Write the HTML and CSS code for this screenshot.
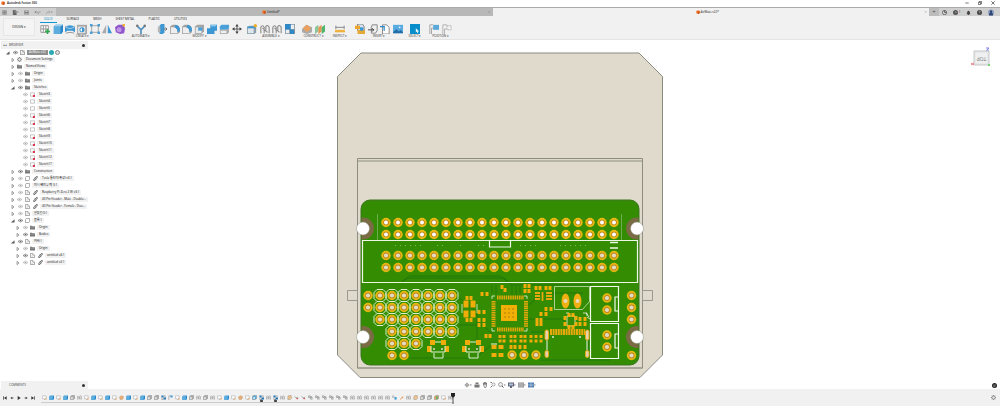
FILE: index.html
```html
<!DOCTYPE html>
<html lang="en">
<head>
    <meta charset="UTF-8">
    <meta name="viewport" content="width=device-width, initial-scale=1.0">
    <title>Autodesk Fusion 360</title>
    <link rel="stylesheet" href="styles.css">
</head>
<body>
    <!-- icon set, every symbol is drawn on a 12x12 grid -->
    <svg class="sprite" aria-hidden="true">
        <symbol id="logo" viewBox="0 0 12 12"><path d="M1 3l5-2 5 2v7l-5 2-5-2z" fill="#ee7023"/><path d="M6 5l5-2v7l-5 2z" fill="#c9501a"/></symbol>
        <symbol id="grid" viewBox="0 0 12 12"><path d="M1 1h10v10H1z" fill="#777"/><path d="M1 4h10M1 8h10M4 1v10M8 1v10" stroke="#bbb"/></symbol>
        <symbol id="file" viewBox="0 0 12 12"><path d="M2 0h6l3 3v9H2z" fill="#666"/><path d="M7 1v4h4" stroke="#ccc" fill="none"/></symbol>
        <symbol id="save" viewBox="0 0 12 12"><path d="M1 1h10v10H1z" fill="#777"/><path d="M3 1h6v4H3zM3 8h6v3H3z" fill="#c5c5c5"/></symbol>
        <symbol id="undo" viewBox="0 0 12 12"><path d="M5 2L2 5l3 3M2 5h6q3 0 3 5" fill="none" stroke="#777" stroke-width="1.5"/></symbol>
        <symbol id="redo" viewBox="0 0 12 12"><path d="M7 2l3 3-3 3M10 5H4q-3 0-3 5" fill="none" stroke="#999" stroke-width="1.5"/></symbol>
        <symbol id="sketch" viewBox="0 0 12 12"><path d="M1 2h9v8H1zM1 6h9M4 2v8M7 2v8" fill="#fff" stroke="#8a8a8a"/><path d="M9 6v6M6 9h6" stroke="#35a853" stroke-width="2"/></symbol>
        <symbol id="extrude" viewBox="0 0 12 12"><path d="M1 3l2-2h9v8l-2 3H1z" fill="#2b87c8"/><path d="M1 3h8v9H1z" fill="#5badde"/><path d="M1 3l2-2h9L9 3z" fill="#9dd0ef"/></symbol>
        <symbol id="revolve" viewBox="0 0 12 12"><path d="M0 4q6-5 12 0v6l-3-2H3l-3 2z" fill="#3c97d3"/><path d="M1 4q5 3 10 0" stroke="#b5daf1" fill="none"/><path d="M0 2v3M12 2v3M1 11q5-2 10 0" stroke="#888" fill="none"/></symbol>
        <symbol id="hole" viewBox="0 0 12 12"><path d="M0 1h12v11H0z" fill="#a5a5a5"/><path d="M1 3h9v8H1z" fill="#e2e2e2"/><circle cx="6" cy="7" r="3" fill="#3c97d3"/><path d="M6 5a2 2 0 0 0 0 4z" fill="#fff"/></symbol>
        <symbol id="pattern" viewBox="0 0 12 12"><path d="M2 2h8v8H2z" fill="none" stroke="#999"/><path d="M0 0h3v3H0zM9 0h3v3H9zM0 9h3v3H0zM9 9h3v3H9z" fill="#4a9fd8"/></symbol>
        <symbol id="mirror" viewBox="0 0 12 12"><path d="M5 1v10H0z" fill="#aaa"/><path d="M7 1v10h5z" fill="#3c97d3"/></symbol>
        <symbol id="form" viewBox="0 0 12 12"><path d="M0 4l4-3h6l2 4-1 6-5 1-5-2z" fill="#8f55cc"/><circle cx="5" cy="7" r="3" fill="#c095e6"/><path d="M9 0h3v3H9z" fill="#f2b233"/></symbol>
        <symbol id="automate" viewBox="0 0 12 12"><path d="M1 2l5 5 5-5M6 7v5" fill="none" stroke="#4f8fbd" stroke-width="2"/><circle cx="1.5" cy="2" r="1.5" fill="#777"/><circle cx="10.5" cy="2" r="1.5" fill="#777"/></symbol>
        <symbol id="press" viewBox="0 0 12 12"><path d="M3 2l2-2h4v10l-2 2H3z" fill="#3c97d3"/><path d="M1 3h3v7H1z" fill="#b5b5b5"/><path d="M8 6h4M10 4l2 2-2 2" stroke="#666" fill="none"/></symbol>
        <symbol id="fillet" viewBox="0 0 12 12"><path d="M0 3l3-2h4q5 1 5 7v2l-3 2H0z" fill="#a2a2a2"/><path d="M1 4h4q4 1 4 6v1H1z" fill="#eee"/><path d="M7 1q5 1 5 7l-3 2q0-5-4-6z" fill="#3c97d3"/></symbol>
        <symbol id="shell" viewBox="0 0 12 12"><path d="M1 3l3-2h8v8l-3 3H1z" fill="#a5a5a5"/><path d="M2 4h7v7H2z" fill="#e9e9e9"/><path d="M5 4h5v4H5z" fill="#4a9fd8"/></symbol>
        <symbol id="combine" viewBox="0 0 12 12"><path d="M4 1h8v7H9v4H0V5h4z" fill="#3c97d3"/><path d="M4 1h8l-2 2H5z" fill="#8bc6ec"/></symbol>
        <symbol id="split" viewBox="0 0 12 12"><path d="M1 3l2-2h9v4l-2 2H1z" fill="#4a9fd8"/><path d="M1 7h9l2-2v5l-2 2H1z" fill="#aaa"/><path d="M2 8h7v3H2z" fill="#eee"/></symbol>
        <symbol id="move" viewBox="0 0 12 12"><path d="M6 1v10M1 6h10" stroke="#444"/><path d="M6 0l2 3H4zM6 12l2-3H4zM0 6l3-2v4zM12 6L9 4v4z" fill="#444"/></symbol>
        <symbol id="component" viewBox="0 0 12 12"><path d="M0 4l3-2h8v8l-2 2H0z" fill="#8b9fab"/><path d="M1 5h7v6H1z" fill="#dfe7ec"/><path d="M0 3h9l2 2H1z" fill="#3c97d3"/><circle cx="10" cy="2" r="2" fill="#f3ac25"/></symbol>
        <symbol id="joint" viewBox="0 0 12 12"><path d="M1 11V4q2-4 4 0v7M7 9V3q2-3 4 1v7M3 5l6 5" fill="none" stroke="#888" stroke-width="1.3"/></symbol>
        <symbol id="rigid" viewBox="0 0 12 12"><path d="M0 0h12v12H0z" fill="#8b979e"/><path d="M0 0h7v7H0zM6 7h5v5H6z" fill="#2f88c5"/><path d="M7 1h4v5H7zM1 7h4v4H1z" fill="#e8eff4"/></symbol>
        <symbol id="plane" viewBox="0 0 12 12"><path d="M0 6l5-5 7 3v6l-6 2-6-2z" fill="#aaa"/><path d="M1 5l5-4 5 4-5 5z" fill="#eba05e"/></symbol>
        <symbol id="midplane" viewBox="0 0 12 12"><path d="M0 4l4-3v8l-4 3z" fill="#8cc79b"/><path d="M4 4l4-3v8l-4 3z" fill="#e79550"/><path d="M8 4l4-3v8l-4 3z" fill="#4fb56c"/></symbol>
        <symbol id="measure" viewBox="0 0 12 12"><path d="M0 7h12v3H0z" fill="#f0b23e"/><path d="M1 4h10M1 2v4M11 2v4" stroke="#777"/></symbol>
        <symbol id="derive" viewBox="0 0 12 12"><path d="M3 0h6l2 3v5H3z" fill="#d5e3ee" stroke="#777"/><path d="M0 2h6v4H0z" fill="#eda62b"/><path d="M3 7h9v5H3z" fill="#e5a937"/><path d="M6 4h4v4H6z" fill="#3c97d3"/></symbol>
        <symbol id="insert" viewBox="0 0 12 12"><path d="M5 1h6v7l-2 3H4V4z" fill="#eee" stroke="#777"/><path d="M0 7h7M5 5l2 2-2 2" stroke="#333" fill="none"/></symbol>
        <symbol id="insertfile" viewBox="0 0 12 12"><path d="M3 1h5l3 3v8H3z" fill="#fff" stroke="#777"/><path d="M0 3h5v5" fill="none" stroke="#2b87c8" stroke-width="1.5"/></symbol>
        <symbol id="picture" viewBox="0 0 12 12"><path d="M0 1h12v10H0z" fill="#58abe0"/><path d="M0 10l4-4 3 3 2-2 3 3v1H0z" fill="#236ea6"/><circle cx="8" cy="4" r="1" fill="#fff"/></symbol>
        <symbol id="select" viewBox="0 0 12 12"><path d="M0 0h12v12H0z" fill="#078dc9"/><path d="M7 5l4 4H9l1 2H9L8 9l-1 1z" fill="#fff"/></symbol>
        <symbol id="capture" viewBox="0 0 12 12"><path d="M1 12V1h4M3 12V5h3" stroke="#999" fill="none"/><path d="M5 1h7v6H5z" fill="#5ba8d9"/></symbol>
        <symbol id="revert" viewBox="0 0 12 12"><path d="M1 12V1h5M3 12V6h3" stroke="#aaa" fill="none"/><path d="M6 2h5v5H6z" stroke="#aaa" stroke-dasharray="2 1" fill="none"/></symbol>
        <symbol id="eye" viewBox="0 0 12 12"><path d="M0 6q6-7 12 0-6 7-12 0z" fill="none" stroke="currentColor" stroke-width="1.5"/><circle cx="6" cy="6" r="2" fill="currentColor"/></symbol>
        <symbol id="arrow" viewBox="0 0 12 12"><path d="M3 1l6 5-6 5z" fill="#fff" stroke="#777" stroke-width="2"/></symbol>
        <symbol id="open" viewBox="0 0 12 12"><path d="M10 2v8H1z" fill="#555" stroke="#555"/></symbol>
        <symbol id="gear" viewBox="0 0 12 12"><circle cx="6" cy="6" r="4" fill="#eee" stroke="#777" stroke-width="2"/><path d="M6 0v2M6 10v2M0 6h2M10 6h2M2 2l1 1M9 9l1 1M10 2L9 3M3 9l-1 1" stroke="#777" stroke-width="2"/></symbol>
        <symbol id="folder" viewBox="0 0 12 12"><path d="M0 2h5l1 1h6v8H0z" fill="#777"/><path d="M1 5h10" stroke="#ccc"/></symbol>
        <symbol id="plan" viewBox="0 0 12 12"><path d="M1 2h10v8H1z" fill="#fff" stroke="#777"/></symbol>
        <symbol id="planlock" viewBox="0 0 12 12"><path d="M1 2h10v8H1z" fill="#fff" stroke="#777"/><path d="M7 7h5v5H7z" fill="#d9364f"/></symbol>
        <symbol id="part" viewBox="0 0 12 12"><path d="M1 1h6v4h4v6H1z" fill="#fff" stroke="#777" stroke-width="1.5"/><path d="M5 5v6" stroke="#999"/></symbol>
        <symbol id="body" viewBox="0 0 12 12"><path d="M1 3l2-2h8v7l-2 3H1z" fill="#fff" stroke="#777" stroke-width="1.5"/></symbol>
        <symbol id="link" viewBox="0 0 12 12"><path d="M6 5L2 8q-2 2 0 3t3-1l3-3M6 7l4-3q2-2 0-3T7 2L4 5" fill="none" stroke="#333" stroke-width="1.8"/></symbol>
        <symbol id="t-s" viewBox="0 0 12 12"><path d="M1 2h9v7H7v3L5 9H1z" fill="#fff" stroke="#8e8e8e"/><path d="M8 8h3v3H8z" fill="#efa95b"/></symbol>
        <symbol id="t-f" viewBox="0 0 12 12"><path d="M1 4l3-3h7v7l-3 3H1z" fill="#aaa" stroke="#777"/><path d="M2 5h5v5H2z" fill="#ddd"/></symbol>
        <symbol id="t-p" viewBox="0 0 12 12"><path d="M1 5l5-3 5 2-2 6-6 1z" fill="#f0ae70" stroke="#a98865"/></symbol>
        <symbol id="t-c" viewBox="0 0 12 12"><path d="M2 12V2h5" stroke="#666" fill="none"/><path d="M6 1h5v5H6z" fill="#3c97d3"/></symbol>
        <symbol id="t-m" viewBox="0 0 12 12"><path d="M1 1h5v5H1zM6 6h6v5H6z" fill="#2878b4"/><path d="M6 2h4v4M2 7v4h4" stroke="#555" fill="none"/></symbol>
        <symbol id="t-h" viewBox="0 0 12 12"><path d="M1 3l3-2h7v7l-3 3H1z" fill="#5babdd" stroke="#777"/><circle cx="5" cy="7" r="2" fill="#fff"/></symbol>
        <symbol id="t-o" viewBox="0 0 12 12"><path d="M2 3l3-2h5l1 7-3 3H2z" fill="#eec28c" stroke="#888"/></symbol>
        <symbol id="t-r" viewBox="0 0 12 12"><path d="M1 3l4 4 5-2M5 7l3 3" fill="none" stroke="#888" stroke-width="1.5"/><path d="M6 7h4v3H6z" fill="#dd5c68"/></symbol>
        <symbol id="t-u" viewBox="0 0 12 12"><path d="M1 2h4v4H1zM6 6h4v4H6zM5 4h4v2" fill="none" stroke="#888" stroke-width="1.5"/></symbol>
        <symbol id="t-b" viewBox="0 0 12 12"><path d="M1 2h4v4H1z" fill="none" stroke="#888"/><path d="M6 5h5v6H6z" fill="#3c97d3"/></symbol>
        <symbol id="t-w" viewBox="0 0 12 12"><path d="M2 11l7-8 2 2-7 6z" fill="#e99148"/></symbol>
        <symbol id="t-g" viewBox="0 0 12 12"><path d="M1 4l3-3h7v7l-3 3H1z" fill="#e9a268" stroke="#777"/><path d="M5 3h4v7H5z" fill="#57b26c"/></symbol>
    </svg>

    <header class="title-bar">
        <svg class="icon-s"><use href="#logo"/></svg>
        <h1>Autodesk Fusion 360</h1>
        <div class="window-buttons">
            <button aria-label="Minimize"><svg viewBox="0 0 12 12"><path d="M1 6h10" stroke="#333" stroke-width="2"/></svg></button>
            <button aria-label="Restore"><svg viewBox="0 0 12 12"><path d="M1 4h7v7H1zM4 4V1h7v7H8" fill="none" stroke="#333" stroke-width="2"/></svg></button>
            <button aria-label="Close"><svg viewBox="0 0 12 12"><path d="M1 1l10 10M11 1L1 11" stroke="#333" stroke-width="2"/></svg></button>
        </div>
    </header>

    <nav class="doc-bar">
        <div class="quick">
            <button aria-label="Data panel"><svg><use href="#grid"/></svg></button>
            <button aria-label="File"><svg><use href="#file"/></svg>▾</button>
            <button aria-label="Save"><svg><use href="#save"/></svg></button>
            <button aria-label="Undo"><svg><use href="#undo"/></svg>▾</button>
            <button aria-label="Redo"><svg><use href="#redo"/></svg>▾</button>
        </div>
        <div class="doc-tab">
            <button class="doc-name"><svg><use href="#logo"/></svg>Untitled*</button>
            <button class="doc-close" aria-label="Close tab">×</button>
        </div>
        <div class="doc-tab active">
            <button class="doc-name"><svg><use href="#logo"/></svg>AirMate v22*</button>
            <button class="doc-close" aria-label="Close tab">×</button>
        </div>
        <button class="doc-add" aria-label="New design">+</button>
        <div class="account">
            <button aria-label="Extensions"><svg viewBox="0 0 12 12"><circle cx="6" cy="6" r="5" fill="#ddd" stroke="#555" stroke-width="2"/><path d="M6 1v5h5" fill="none" stroke="#555" stroke-width="2"/></svg></button>
            <button class="jobs" aria-label="Job status"><svg viewBox="0 0 12 12"><circle cx="6" cy="6" r="6" fill="#555"/><path d="M6 3v3h3" fill="none" stroke="#ddd"/></svg>1</button>
            <button aria-label="Notifications"><svg viewBox="0 0 12 12"><path d="M1 10q2-2 2-6 3-5 6 0 0 4 2 6zM5 10h2v2H5z" fill="#444"/></svg></button>
            <button aria-label="Help"><svg viewBox="0 0 12 12"><circle cx="6" cy="6" r="6" fill="#444"/><path d="M4 4q2-2 4 0 0 1-2 2v1M6 9v1" fill="none" stroke="#eee"/></svg></button>
            <button class="avatar" aria-label="Profile"><svg viewBox="0 0 12 12"><circle cx="6" cy="6" r="6" fill="#8999ba"/><path d="M2 12V8h2V2h4v6h2v4z" fill="#2e4674"/></svg></button>
        </div>
    </nav>

    <section class="ribbon">
        <button class="design">DESIGN ▾</button>
        <div class="ribbon-main">
            <div class="ribbon-tabs">
                <button class="current">SOLID</button>
                <button>SURFACE</button>
                <button>MESH</button>
                <button>SHEET METAL</button>
                <button>PLASTIC</button>
                <button>UTILITIES</button>
            </div>
            <div class="groups">
                <div class="group create">
                    <div class="tools">
                        <button aria-label="Create sketch"><svg><use href="#sketch"/></svg></button>
                        <button aria-label="Extrude"><svg><use href="#extrude"/></svg></button>
                        <button aria-label="Revolve"><svg><use href="#revolve"/></svg></button>
                        <button aria-label="Hole"><svg><use href="#hole"/></svg></button>
                        <button aria-label="Pattern"><svg><use href="#pattern"/></svg></button>
                        <button aria-label="Mirror"><svg><use href="#mirror"/></svg></button>
                        <button aria-label="Create form"><svg><use href="#form"/></svg></button>
                    </div>
                    <button class="group-name">CREATE ▾</button>
                </div>
                <div class="group automate">
                    <div class="tools"><button aria-label="Automated modeling"><svg><use href="#automate"/></svg></button></div>
                    <button class="group-name">AUTOMATE ▾</button>
                </div>
                <div class="group modify">
                    <div class="tools">
                        <button aria-label="Press pull"><svg><use href="#press"/></svg></button>
                        <button aria-label="Fillet"><svg><use href="#fillet"/></svg></button>
                        <button aria-label="Chamfer"><svg><use href="#fillet"/></svg></button>
                        <button aria-label="Shell"><svg><use href="#shell"/></svg></button>
                        <button aria-label="Combine"><svg><use href="#combine"/></svg></button>
                        <button aria-label="Split body"><svg><use href="#split"/></svg></button>
                        <button aria-label="Move"><svg><use href="#move"/></svg></button>
                    </div>
                    <button class="group-name">MODIFY ▾</button>
                </div>
                <div class="group assemble">
                    <div class="tools">
                        <button aria-label="New component"><svg><use href="#component"/></svg></button>
                        <button aria-label="Joint"><svg><use href="#joint"/></svg></button>
                        <button aria-label="As-built joint"><svg><use href="#joint"/></svg></button>
                        <button aria-label="Rigid group"><svg><use href="#rigid"/></svg></button>
                    </div>
                    <button class="group-name">ASSEMBLE ▾</button>
                </div>
                <div class="group construct">
                    <div class="tools">
                        <button aria-label="Offset plane"><svg><use href="#plane"/></svg></button>
                        <button aria-label="Midplane"><svg><use href="#midplane"/></svg></button>
                    </div>
                    <button class="group-name">CONSTRUCT ▾</button>
                </div>
                <div class="group inspect">
                    <div class="tools"><button aria-label="Measure"><svg><use href="#measure"/></svg></button></div>
                    <button class="group-name">INSPECT ▾</button>
                </div>
                <div class="group insert">
                    <div class="tools">
                        <button aria-label="Insert derive"><svg><use href="#derive"/></svg></button>
                        <button aria-label="Insert mesh"><svg><use href="#insert"/></svg></button>
                        <button aria-label="Insert SVG"><svg><use href="#insertfile"/></svg></button>
                        <button aria-label="Canvas"><svg><use href="#picture"/></svg></button>
                    </div>
                    <button class="group-name">INSERT ▾</button>
                </div>
                <div class="group pick">
                    <div class="tools"><button aria-label="Select"><svg><use href="#select"/></svg></button></div>
                    <button class="group-name">SELECT ▾</button>
                </div>
                <div class="group position">
                    <div class="tools">
                        <button aria-label="Capture position"><svg><use href="#capture"/></svg></button>
                        <button aria-label="Revert position"><svg><use href="#revert"/></svg></button>
                    </div>
                    <button class="group-name">POSITION ▾</button>
                </div>
            </div>
        </div>
    </section>

    <main class="workspace">
        <aside class="side">
            <div class="panel-head"><span class="collapse">◂◂</span><h2>BROWSER</h2><button class="pin" aria-label="Browser options"></button></div>
            <ul class="tree" id="tree"></ul>
            <div class="panel-head comments"><h2>COMMENTS</h2><button class="pin" aria-label="Comment options"></button></div>
        </aside>

        <section class="canvas">
            <svg class="model" viewBox="337 52 326 327" role="img" aria-label="Circuit board, top view">
                <defs>
                    <clipPath id="pcb"><rect x="361" y="200" width="278" height="165" rx="9"/></clipPath>
                    <g id="pad"><circle r="4.7" fill="#e9b80f"/><circle r="2.8" fill="#b98526"/><circle r="2" fill="#fff"/></g>
                    <g id="via"><circle r="4.7" fill="#e9b80f"/><circle r="2.9" fill="#b98526"/><circle r="2.1" fill="#e3dcc0"/></g>
                    <g id="switch">
                        <path d="M-8-6h5v5h-5zM3-6h5v5H3zM-11 0h4v6h-4zM7 0h4v6H7z" fill="#f0ac08"/>
                        <path d="M-7 0V6H7V0M-3-4h6M-4 7v5h9V7" fill="none" stroke="#e2f2d5"/>
                        <circle cx="-4" cy="3" r="1" fill="#dfdac9"/><circle cx="4" cy="3" r="1" fill="#dfdac9"/>
                    </g>
                    <g id="socket">
                        <path d="M.5.5h28v35H.5zM28 11h-3v14h3" fill="none" stroke="#f3faee" stroke-width="1.2"/>
                        <use href="#via" x="17" y="12"/><use href="#via" x="17" y="24"/>
                    </g>
                </defs>
                <!-- case -->
                <path d="M361 53h278l23.500 23.500V355L640 377.500H360L337.500 355V76.500z" fill="#dfdacb" stroke="#8b8b82"/>
                <path d="M357.500 368.500v-210h285v210M357.500 161h285" fill="none" stroke="#8e8e80"/>
                <path d="M358 368h284" stroke="#6e6e66"/>
                <path d="M347.500 290.500h10v10h-10zM642.500 290.500h10v10h-10z" fill="#dfdacb" stroke="#99988c"/>
                <!-- board with its four mounting holes -->
                <g clip-path="url(#pcb)">
                    <path d="M361 200h278v165H361z" fill="#338c02"/>
                    <g fill="none" stroke="#23780a" stroke-width="1">
                        <path d="M400 283l8-5h96l8 7h80M404 280l6-4h90l12 9M457 296l20 16v42M459 325h24l9 9M529 305l14-12h40M528 319h34l8 9M531 332h22M490 346l-14 12h-66M540 360h70M594 323l-5 7v28M492 285v8M496 285v9M500 285l4 5M512 285v10M516 285v10M520 286v8"/>
                    </g>
                    <g fill="#7a6b45"><circle cx="363" cy="228.500" r="11"/><circle cx="637" cy="228.500" r="11"/><circle cx="363" cy="337" r="11"/><circle cx="637" cy="337" r="11"/></g>
                </g>
                <rect x="361" y="200" width="278" height="165" rx="9" fill="none" stroke="#3c7420"/>
                <g fill="#fff" stroke="#8e8e80" stroke-width=".5"><circle cx="363" cy="228.500" r="6.500"/><circle cx="637" cy="228.500" r="6.500"/><circle cx="363" cy="337" r="6.500"/><circle cx="637" cy="337" r="6.500"/></g>
                <!-- silkscreen -->
                <g fill="none" stroke="#eef7e6">
                    <path d="M362.500 240.500h275v42h-275zM489.500 240.500v6.500h21v-6.500" stroke-width="1.200"/>
                    <path d="M610 242.500h8M610 248h8" stroke-width="1.500"/>
                    <path d="M377.500 214v26M621.500 214v26" stroke="#6cad4d"/>
                    <path d="M395 245.500h26M437 245.500h8M460 245.500h2M478 245.500h10M520 245.500h20M560 245.500h30" stroke="#7fbd60" stroke-dasharray="1 4"/>
                    <path d="M554.500 286.500h35v15l-7 8h-28z" stroke="#c8e3b7" stroke-width=".8"/>
                    <path d="M492 299v-3h3M524 296h3v3M492 328v3h3M527 328v3h-3M462 304v9M477 304v9M567 316h8v10h-8zM566 313h3M583 313h4v3M587 317l3 2M586 313l3 4" stroke-width=".8"/>
                    <path d="M547 340v10M587 340v10M491 344h6"/>
                </g>
                <g id="outlines" fill="none" stroke="#dcefcf"></g>
                <g id="pads"></g>
                <use href="#switch" x="438" y="346"/><use href="#switch" x="473" y="346"/>
                <use href="#socket" x="590" y="286"/><use href="#socket" x="590" y="323"/>
                <!-- controller -->
                <path d="M497 297.500h27M497 329.500h27" stroke="#e5a80c" stroke-width="4" stroke-dasharray="1.500 .7"/>
                <path d="M493.500 301v26M526 301v26" stroke="#e5a80c" stroke-width="4" stroke-dasharray="1.500 .7"/>
                <path d="M501 305h16v16h-16z" fill="#f2af05"/>
                <g fill="#a77a12"><circle cx="505" cy="309" r=".8"/><circle cx="509" cy="309" r=".8"/><circle cx="513" cy="309" r=".8"/><circle cx="505" cy="313" r=".8"/><circle cx="509" cy="313" r=".8"/><circle cx="513" cy="313" r=".8"/><circle cx="505" cy="317" r=".8"/><circle cx="509" cy="317" r=".8"/><circle cx="513" cy="317" r=".8"/></g>
                <!-- battery plug and usb -->
                <g fill="#f0b011"><ellipse cx="565.500" cy="301" rx="4" ry="7.500"/><ellipse cx="577.500" cy="301" rx="4" ry="7.500"/></g>
                <g fill="#e8d9b8"><circle cx="565.500" cy="301" r="2"/><circle cx="577.500" cy="301" r="2"/></g>
                <path d="M550 332h35" stroke="#e8a90c" stroke-width="6" stroke-dasharray="2 .6"/>
                <g fill="#e6d3ae" stroke="#e8a90c"><rect x="545" y="330" width="3.500" height="10" rx="1.700"/><rect x="585.500" y="330" width="3.500" height="10" rx="1.700"/><rect x="545" y="350.500" width="3.500" height="7" rx="1.700"/><rect x="585.500" y="350.500" width="3.500" height="7" rx="1.700"/></g>
                <g fill="#dfe9d5"><circle cx="553" cy="337" r="1"/><circle cx="580" cy="337" r="1"/></g>
                <path d="M535 293h5M535 296h5M535 299h5M546 293h6M546 296h6M546 299h6M542.500 292v9" stroke="#e8a90c" stroke-width="1.800"/>
            </svg>
            <div class="view-tools">
                <button aria-label="Orbit"><svg viewBox="0 0 12 12"><path d="M1 6h10M6 1v10" stroke="#666"/><circle cx="6" cy="6" r="3" fill="none" stroke="#666"/></svg>▾</button>
                <button aria-label="Look at"><svg viewBox="0 0 12 12"><path d="M1 5h10v6H1zM3 1h6v3H3z" fill="#777"/></svg></button>
                <button aria-label="Pan"><svg viewBox="0 0 12 12"><path d="M3 6V2h1v3-4h2v4-4h2v4-3h1v7l-1 2H5z" fill="#ddd" stroke="#555"/></svg></button>
                <button aria-label="Zoom"><svg viewBox="0 0 12 12"><path d="M1 1h3M4 8l-3 3" stroke="#555" stroke-width="1.500"/><circle cx="7" cy="5" r="3" fill="none" stroke="#555"/></svg></button>
                <button aria-label="Fit"><svg viewBox="0 0 12 12"><circle cx="5" cy="5" r="4" fill="#eee" stroke="#555"/><path d="M8 8l3 3" stroke="#555" stroke-width="2"/></svg>▾</button>
                <button aria-label="Display settings"><svg viewBox="0 0 12 12"><path d="M0 1h12v8H0zM4 9h4v3H4z" fill="#667"/><path d="M2 3h8v4H2z" fill="#a8bddb"/></svg>▾</button>
                <button aria-label="Grid and snaps"><svg viewBox="0 0 12 12"><path d="M0 1h12v10H0z" fill="#888"/><path d="M0 4h12M0 8h12M4 1v10M8 1v10" stroke="#ddd"/></svg>▾</button>
                <button aria-label="Viewports"><svg viewBox="0 0 12 12"><path d="M0 1h12v10H0z" fill="#4d7fb5"/><path d="M6 1v10M0 6h12" stroke="#dde8f3"/></svg>▾</button>
            </div>
        </section>

        <div class="corner">
            <svg class="cube" viewBox="0 0 20 20" role="img" aria-label="View cube">
                <path d="M17 17V1M17 17H1" stroke="#ccc"/>
                <path d="M15 1h3l-3 3h3" fill="none" stroke="#8282ee"/>
                <path d="M3 4h15v14H3z" fill="#e8e9ea" stroke="#c5c7c9"/>
                <path d="M5 6h11v10H5z" fill="#eff0f0"/>
                <text x="-10.500" y="-9.500" transform="rotate(180)">TOP</text>
                <path d="M0 16l3 2M3 16l-3 2" stroke="#e88"/>
                <path d="M18 17v2" stroke="#74d774" stroke-width="2"/>
            </svg>
            <button class="chat" aria-label="Notifications"><svg viewBox="0 0 12 12"><circle cx="6" cy="6" r="6" fill="#222"/><path d="M3 5h7M3 8h5" stroke="#fff"/></svg></button>
        </div>
    </main>

    <footer class="timeline">
        <div class="player">
            <button aria-label="To start"><svg viewBox="0 0 12 12"><path d="M1 1h2v10H1zM11 1v10L3 6z" fill="#333"/></svg></button>
            <button aria-label="Step back"><svg viewBox="0 0 12 12"><path d="M7 2v8L1 6zM7 5h4v2H7z" fill="#333"/></svg></button>
            <button aria-label="Play"><svg viewBox="0 0 12 12"><path d="M2 0v12l9-6z" fill="#333"/></svg></button>
            <button aria-label="Step forward"><svg viewBox="0 0 12 12"><path d="M5 2v8l6-4zM1 5h4v2H1z" fill="#333"/></svg></button>
            <button aria-label="To end"><svg viewBox="0 0 12 12"><path d="M9 1h2v10H9zM1 1v10l8-5z" fill="#333"/></svg></button>
        </div>
        <div class="features" id="features"></div>
        <svg class="marker" viewBox="0 0 4 12"><path d="M0 1h4v3L2 6 0 4z" fill="#222"/><path d="M2 5v7" stroke="#555"/></svg>
        <button class="settings" aria-label="Timeline settings"><svg><use href="#gear"/></svg></button>
    </footer>

    <script src="app.js"></script>
</body>
</html>
```
FILE: styles.css
```css
* {
    box-sizing: border-box;
}
body {
    margin: 0;
    min-height: 100vh;
    display: flex;
    flex-direction: column;
    font-family: "Open Sans", "Noto Sans CJK KR", sans-serif;
    font-size: 3px;
    line-height: 4px;
    color: #111;
    background: #fff;
}
h1, h2 {
    margin: 0;
    font-size: 3px;
    font-weight: normal;
}
button {
    display: flex;
    align-items: center;
    justify-content: center;
    margin: 0;
    padding: 0;
    border: 0;
    background: none;
    color: inherit;
    font: inherit;
    white-space: nowrap;
    cursor: pointer;
}
svg {
    display: block;
    flex: none;
}
.sprite {
    position: absolute;
    width: 0;
    height: 0;
}

/* window title */
.title-bar {
    display: flex;
    align-items: center;
    gap: 2px;
    height: 7px;
    padding: 0 5px 1px 1px;
}
.title-bar h1 {
    font-weight: 600;
}
.icon-s {
    width: 4px;
    height: 4px;
}
.window-buttons {
    display: flex;
    gap: 9px;
    margin-left: auto;
}
.window-buttons svg {
    width: 4px;
    height: 4px;
}

/* open documents */
.doc-bar {
    display: flex;
    height: 9px;
    border-top: 1px solid #aaa;
    background: #cfcfcf;
}
.quick {
    display: flex;
    align-items: center;
    justify-content: space-between;
    width: 56px;
    padding: 0 3px 0 2px;
    color: #777;
}
.quick svg {
    width: 5px;
    height: 5px;
}
.doc-tab {
    flex: 1;
    display: flex;
    align-items: center;
    background: #b8b8b8;
}
.doc-tab.active {
    background: #f1f1f1;
}
.doc-name {
    flex: 1;
    gap: 1px;
}
.doc-name svg {
    width: 4px;
    height: 4px;
}
.doc-close {
    width: 7px;
    color: #666;
}
.doc-add {
    width: 10px;
    background: #bcbcbc;
    font-size: 6px;
    color: #555;
}
.account {
    display: flex;
    align-items: center;
    justify-content: space-between;
    width: 61px;
    padding: 0 6px 0 3px;
}
.account svg {
    width: 5px;
    height: 5px;
}
.account .jobs {
    gap: 1px;
}
.account .avatar svg {
    width: 6px;
    height: 7px;
}

/* ribbon */
.ribbon {
    display: flex;
    height: 24px;
    background: #f1f1f1;
    border-bottom: 1px solid #e4e4e4;
}
.design {
    width: 32px;
    margin: 2px 4px 3px 3px;
    border: 1px solid #e6e6e6;
    background: #f4f4f4;
}
.ribbon-tabs {
    display: flex;
    gap: 14px;
    height: 7px;
    padding-left: 1px;
}
.ribbon-tabs button {
    border-bottom: 1px solid transparent;
}
.ribbon-tabs .current {
    padding: 0 4px;
    margin-right: -4px;
    border-color: #0a96d4;
    color: #0a86c0;
}
.groups {
    display: flex;
    gap: 5px;
}
.group {
    display: flex;
    flex-direction: column;
    align-items: center;
    padding-top: 1px;
}
.tools {
    display: flex;
    justify-content: space-between;
    width: 100%;
}
.tools button {
    flex: 1;
}
.tools svg {
    width: 10px;
    height: 10px;
}
.group-name {
    width: 0;
    color: #333;
}
.create,
.modify {
    width: 87px;
}
.automate {
    width: 20px;
}
.assemble,
.insert {
    width: 50px;
}
.modify,
.insert {
    margin-right: -2px;
}
.construct {
    width: 25px;
}
.inspect {
    width: 18px;
}
.pick {
    width: 16px;
}
.position {
    width: 25px;
}

/* model area */
.workspace {
    flex: 1;
    display: grid;
    grid-template-columns: 88px 1fr 88px;
}
.side {
    display: flex;
    flex-direction: column;
    padding: 1px 0 0 1px;
}
.panel-head {
    display: flex;
    align-items: center;
    height: 8px;
    padding: 0 3px 0 2px;
    background: #f1f1f1;
    color: #444;
}
.panel-head h2 {
    flex: 1;
}
.collapse {
    width: 6px;
}
.comments {
    margin-top: auto;
    padding-left: 8px;
}
.pin {
    width: 3px;
    height: 3px;
    border-radius: 50%;
    background: #333;
}
.tree {
    margin: 0;
    padding: 0;
    list-style: none;
}
.node {
    display: flex;
    align-items: center;
    height: 7px;
    padding-left: 9px;
}
.node.root {
    padding-left: 4px;
}
.node.deep {
    padding-left: 14px;
}
.toggle {
    width: 6px;
}
.toggle svg {
    width: 4px;
    height: 4px;
}
.see {
    width: 8px;
    color: #aaa;
}
.see.on {
    color: #666;
}
.see svg {
    width: 5px;
    height: 5px;
}
.kind,
.chain {
    width: 5px;
    height: 5px;
    margin: 0 1px;
}
.chain {
    margin-left: 2px;
}
.name {
    margin-left: 1px;
    padding: 0 2px;
    height: 5px;
    line-height: 5px;
    white-space: nowrap;
    background: #f2f2f2;
}
.node.root .name {
    margin: 0 1px;
    background: #8f8f8f;
    color: #fff;
}
.root .kind {
    background: #ddd;
}
.badge {
    width: 5px;
    height: 5px;
    margin-right: 1px;
    border-radius: 50%;
    background: #2aa9b3;
}
.badge.radio {
    border: 1px solid #888;
    background: #ddd;
}
.canvas {
    display: flex;
    flex-direction: column;
    align-items: center;
    justify-content: space-between;
    padding-top: 12px;
}
.model {
    width: 326px;
}
.view-tools {
    display: flex;
    gap: 2px;
    height: 9px;
    color: #555;
}
.view-tools svg {
    width: 6px;
    height: 6px;
}
.corner {
    display: flex;
    flex-direction: column;
    align-items: flex-end;
    justify-content: space-between;
    padding: 7px 9px 0 0;
}
.cube {
    width: 20px;
    height: 20px;
}
.cube text {
    font-size: 5px;
    text-anchor: middle;
    fill: #777;
}
.chat {
    height: 7px;
    margin-right: -6px;
}
.chat svg {
    width: 5px;
    height: 5px;
}

/* timeline */
.timeline {
    display: flex;
    align-items: center;
    height: 17px;
    background: #f1f1f1;
}
.player {
    display: flex;
    gap: 3px;
    padding-left: 3px;
    width: 41px;
}
.player svg {
    width: 4px;
    height: 4px;
}
.features {
    display: flex;
    height: 11px;
    border-bottom: 1px solid #ccc;
}
.features button {
    width: 7px;
}
.features svg {
    width: 5px;
    height: 5px;
}
.features .marked {
    background: radial-gradient(circle at 50% 9px, #444 1px, transparent 2px);
}
.marker {
    width: 4px;
    height: 12px;
    margin-left: -3px;
}
.settings {
    margin: 0 4px 0 auto;
}
.settings svg {
    width: 5px;
    height: 5px;
}
```
FILE: app.js
```js
// browser tree: [level, toggle, eye, icon, linked, name]
var nodes = [
    ["root", "open", "on", "part", 0, "AirMate v22"],
    ["", "arrow", "", "gear", 0, "Document Settings"],
    ["", "arrow", "", "folder", 0, "Named Views"],
    ["", "arrow", "off", "folder", 0, "Origin"],
    ["", "arrow", "off", "folder", 0, "Joints"],
    ["", "open", "on", "folder", 0, "Sketches"],
    ["deep", "", "off", "planlock", 0, "Sketch3"],
    ["deep", "", "off", "plan", 0, "Sketch4"],
    ["deep", "", "off", "plan", 0, "Sketch5"],
    ["deep", "", "off", "planlock", 0, "Sketch6"],
    ["deep", "", "off", "planlock", 0, "Sketch7"],
    ["deep", "", "off", "plan", 0, "Sketch8"],
    ["deep", "", "off", "planlock", 0, "Sketch9"],
    ["deep", "", "off", "planlock", 0, "Sketch10"],
    ["deep", "", "off", "planlock", 0, "Sketch11"],
    ["deep", "", "off", "planlock", 0, "Sketch12"],
    ["deep", "", "off", "planlock", 0, "Sketch17"],
    ["", "arrow", "on", "folder", 0, "Construction"],
    ["", "arrow", "off", "body", 1, "Tesla 통타이(폭상) v3:1"],
    ["", "arrow", "off", "body", 0, "미니 빼미닝 랙 3:1"],
    ["", "arrow", "off", "part", 1, "Raspberry Pi Zero 2 W v3:1"],
    ["", "arrow", "off", "part", 1, "40 Pin Header - Male - Double..."],
    ["", "arrow", "off", "part", 1, "40 Pin Header - Female - Dou..."],
    ["", "arrow", "off", "part", 0, "알맞긴:0:1"],
    ["", "open", "on", "body", 0, "블록:1"],
    ["deep", "arrow", "off", "folder", 0, "Origin"],
    ["deep", "arrow", "on", "folder", 0, "Bodies"],
    ["", "open", "on", "part", 0, "커버:1"],
    ["deep", "arrow", "off", "folder", 0, "Origin"],
    ["deep", "arrow", "on", "part", 1, "untitled v4:1"],
    ["deep", "arrow", "off", "part", 1, "untitled v2:1"]
];

function icon(id, cls) {
    return '<svg class="' + (cls || "") + '"><use href="#' + id + '"/></svg>';
}

document.getElementById("tree").innerHTML = nodes.map(function (n) {
    var html = '<li class="node ' + n[0] + '">';
    html += n[1] ? '<button class="toggle" aria-label="Toggle ' + n[5] + '">' + icon(n[1]) + '</button>' : '<span class="toggle"></span>';
    if (n[2]) {
        html += '<button class="see ' + n[2] + '" aria-label="Show ' + n[5] + '">' + icon("eye") + '</button>';
    }
    html += icon(n[3], "kind");
    if (n[4]) {
        html += icon("link", "chain");
    }
    html += '<span class="name">' + n[5] + '</span>';
    if (n[0] === "root") {
        html += '<span class="badge"></span><span class="badge radio"></span>';
    }
    return html + '</li>';
}).join("");

// timeline features, one letter each
var kinds = { e: "extrude", j: "joint" };
var steps = "sesefjsesespeseffmcsefjfjsespshmjmjorruuuuuujjjjjjbwjoffgsj";
document.getElementById("features").innerHTML = steps.split("").map(function (k, i) {
    var marked = i === 31 || i === 33 ? ' class="marked"' : "";
    return '<button' + marked + ' aria-label="Feature ' + (i + 1) + '">' + icon(kinds[k] || "t-" + k) + '</button>';
}).join("");

// board pads
var pads = "";
var outlines = "";

function round(type, x, y) {
    pads += '<use href="#' + type + '" x="' + x + '" y="' + y + '"/>';
}
function chip(x, y, w, h) {
    pads += '<rect x="' + (x - w / 2) + '" y="' + (y - h / 2) + '" width="' + w + '" height="' + h + '" fill="#f0ac08"/>';
}

// 2x20 headers
for (var i = 0; i < 20; i++) {
    round("pad", 386 + i * 12, 222.5);
    round("pad", 386 + i * 12, 234.5);
    round("via", 386 + i * 12, 255.5);
    round("via", 386 + i * 12, 267.5);
}

// prototyping area: first and last column of every row
[[1, 7], [1, 7], [1, 7], [2, 7], [2, 4]].forEach(function (row, r) {
    for (var c = row[0]; c <= row[1]; c++) {
        var x = 368 + c * 12;
        var y = 295.5 + r * 12;
        round("via", x, y);
        outlines += '<path d="M' + (x - 3) + ' ' + (y - 6) + 'h6l3 3v6l-3 3h-6l-3-3v-6z"/>';
    }
});
[[368, 295.5], [368, 307.5], [392, 355.5], [404, 355.5], [512, 355], [524, 355], [536, 355],
 [631.5, 295.5], [631.5, 307.5], [631.5, 319.5], [631.5, 355.5]].forEach(function (p) {
    round("via", p[0], p[1]);
});

// crystal
[[466, 304], [473, 304], [466, 314], [473, 314]].forEach(function (p) {
    chip(p[0], p[1], 5, 7);
});
[[494, 347], [501, 347], [494, 355], [501, 355]].forEach(function (p) {
    chip(p[0], p[1], 5, 4);
});
// small parts
[[467, 298], [471, 298], [467, 320], [471, 320], [482, 294], [487, 294], [479, 312], [484, 312],
 [479, 320], [484, 320], [479, 325], [484, 325], [486, 336], [490, 336], [502, 287], [505, 290],
 [525, 286], [529, 286], [525, 291], [529, 291], [536, 288], [540, 288], [546, 288], [550, 288],
 [546, 309], [551, 309], [541, 314], [546, 314], [537, 320], [541, 320], [537, 324], [541, 324],
 [580, 319], [585, 319], [580, 324], [585, 324], [565, 318], [565, 324], [576, 318], [576, 324],
 [569, 315], [573, 315], [569, 327], [573, 327],
 [511, 347], [515, 347], [520, 347], [525, 347]].forEach(function (p) {
    chip(p[0], p[1], 3, 4);
});
[500, 504, 511, 515, 521, 525, 531, 536, 541].forEach(function (x) {
    chip(x, 336.5, 3, 3);
    chip(x, 341, 3, 3);
});

document.getElementById("pads").innerHTML = pads;
document.getElementById("outlines").innerHTML = outlines;
```
